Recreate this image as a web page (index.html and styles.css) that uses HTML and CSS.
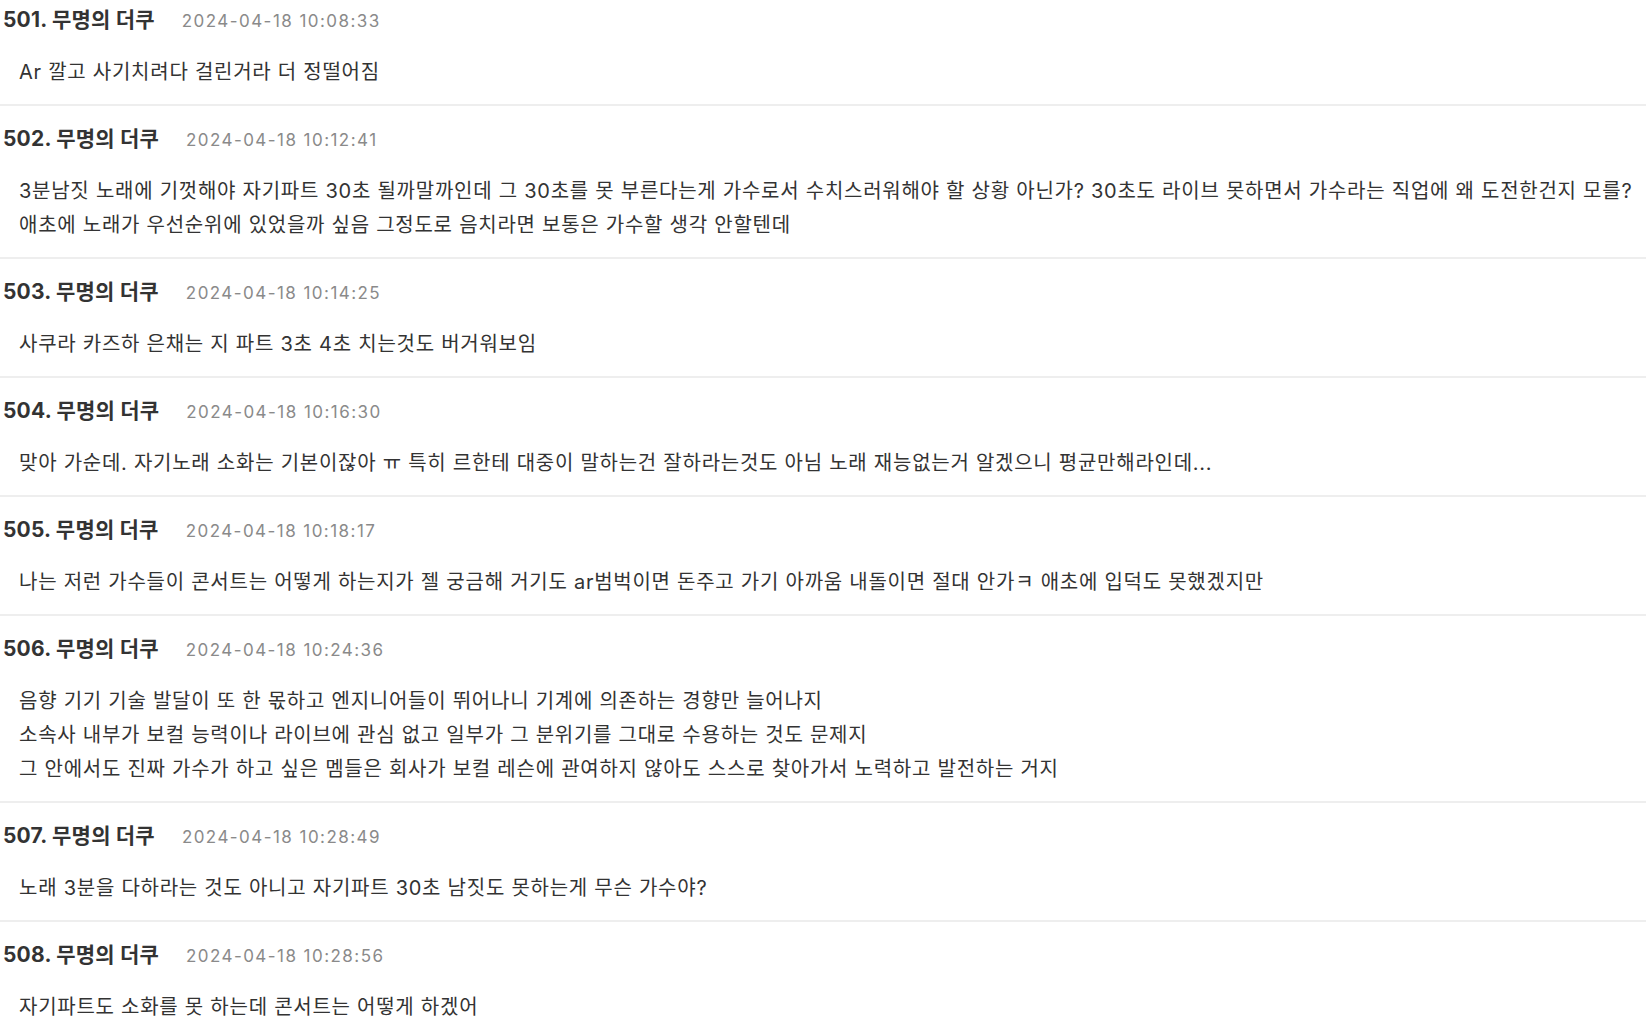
FILE: index.html
```html
<!DOCTYPE html>
<html lang="ko">
<head>
<meta charset="utf-8">
<title>댓글</title>
<link rel="stylesheet" href="styles.css">
</head>
<body>
<div class="thread">
  <div class="post">
    <div class="head"><span class="name">501. 무명의 더쿠</span><span class="date">2024-04-18 10:08:33</span></div>
    <div class="body"><p>Ar 깔고 사기치려다 걸린거라 더 정떨어짐</p></div>
  </div>
  <div class="post">
    <div class="head"><span class="name">502. 무명의 더쿠</span><span class="date">2024-04-18 10:12:41</span></div>
    <div class="body"><p>3분남짓 노래에 기껏해야 자기파트 30초 될까말까인데 그 30초를 못 부른다는게 가수로서 수치스러워해야 할 상황 아닌가? 30초도 라이브 못하면서 가수라는 직업에 왜 도전한건지 모를?</p><p>애초에 노래가 우선순위에 있었을까 싶음 그정도로 음치라면 보통은 가수할 생각 안할텐데</p></div>
  </div>
  <div class="post">
    <div class="head"><span class="name">503. 무명의 더쿠</span><span class="date">2024-04-18 10:14:25</span></div>
    <div class="body"><p>사쿠라 카즈하 은채는 지 파트 3초 4초 치는것도 버거워보임</p></div>
  </div>
  <div class="post">
    <div class="head"><span class="name">504. 무명의 더쿠</span><span class="date">2024-04-18 10:16:30</span></div>
    <div class="body"><p>맞아 가순데. 자기노래 소화는 기본이잖아 ㅠ 특히 르한테 대중이 말하는건 잘하라는것도 아님 노래 재능없는거 알겠으니 평균만해라인데...</p></div>
  </div>
  <div class="post">
    <div class="head"><span class="name">505. 무명의 더쿠</span><span class="date">2024-04-18 10:18:17</span></div>
    <div class="body"><p>나는 저런 가수들이 콘서트는 어떻게 하는지가 젤 궁금해 거기도 ar범벅이면 돈주고 가기 아까움 내돌이면 절대 안가ㅋ 애초에 입덕도 못했겠지만</p></div>
  </div>
  <div class="post">
    <div class="head"><span class="name">506. 무명의 더쿠</span><span class="date">2024-04-18 10:24:36</span></div>
    <div class="body"><p>음향 기기 기술 발달이 또 한 몫하고 엔지니어들이 뛰어나니 기계에 의존하는 경향만 늘어나지</p><p>소속사 내부가 보컬 능력이나 라이브에 관심 없고 일부가 그 분위기를 그대로 수용하는 것도 문제지</p><p>그 안에서도 진짜 가수가 하고 싶은 멤들은 회사가 보컬 레슨에 관여하지 않아도 스스로 찾아가서 노력하고 발전하는 거지</p></div>
  </div>
  <div class="post">
    <div class="head"><span class="name">507. 무명의 더쿠</span><span class="date">2024-04-18 10:28:49</span></div>
    <div class="body"><p>노래 3분을 다하라는 것도 아니고 자기파트 30초 남짓도 못하는게 무슨 가수야?</p></div>
  </div>
  <div class="post">
    <div class="head"><span class="name">508. 무명의 더쿠</span><span class="date">2024-04-18 10:28:56</span></div>
    <div class="body"><p>자기파트도 소화를 못 하는데 콘서트는 어떻게 하겠어</p></div>
  </div>
</div>
</body>
</html>
```
FILE: styles.css
```css
html, body {
  margin: 0;
  padding: 0;
  background: #fff;
}
body {
  font-family: Inter, "Noto Sans CJK KR", sans-serif;
  color: #333;
  overflow: hidden;
}
.thread {
  display: flex;
  flex-direction: column;
}
.post {
  padding: 18px 0 15px 0;
  border-bottom: 2px solid #eeeeee;
}
.post:first-child {
  padding-top: 5px;
}
.head {
  display: flex;
  align-items: baseline;
  gap: 27px;
  height: 30px;
  line-height: 30px;
  padding-left: 3px;
}
.name {
  font-weight: bold;
  font-size: 21px;
  letter-spacing: 0.2px;
  color: #333;
}
.date {
  font-size: 17px;
  letter-spacing: 1.45px;
  color: #8a8a8a;
}
.body {
  margin-top: 20px;
  padding-left: 19px;
  font-size: 20px;
  letter-spacing: 0.74px;
  line-height: 34px;
}
.body p {
  margin: 0;
  white-space: nowrap;
}
```
